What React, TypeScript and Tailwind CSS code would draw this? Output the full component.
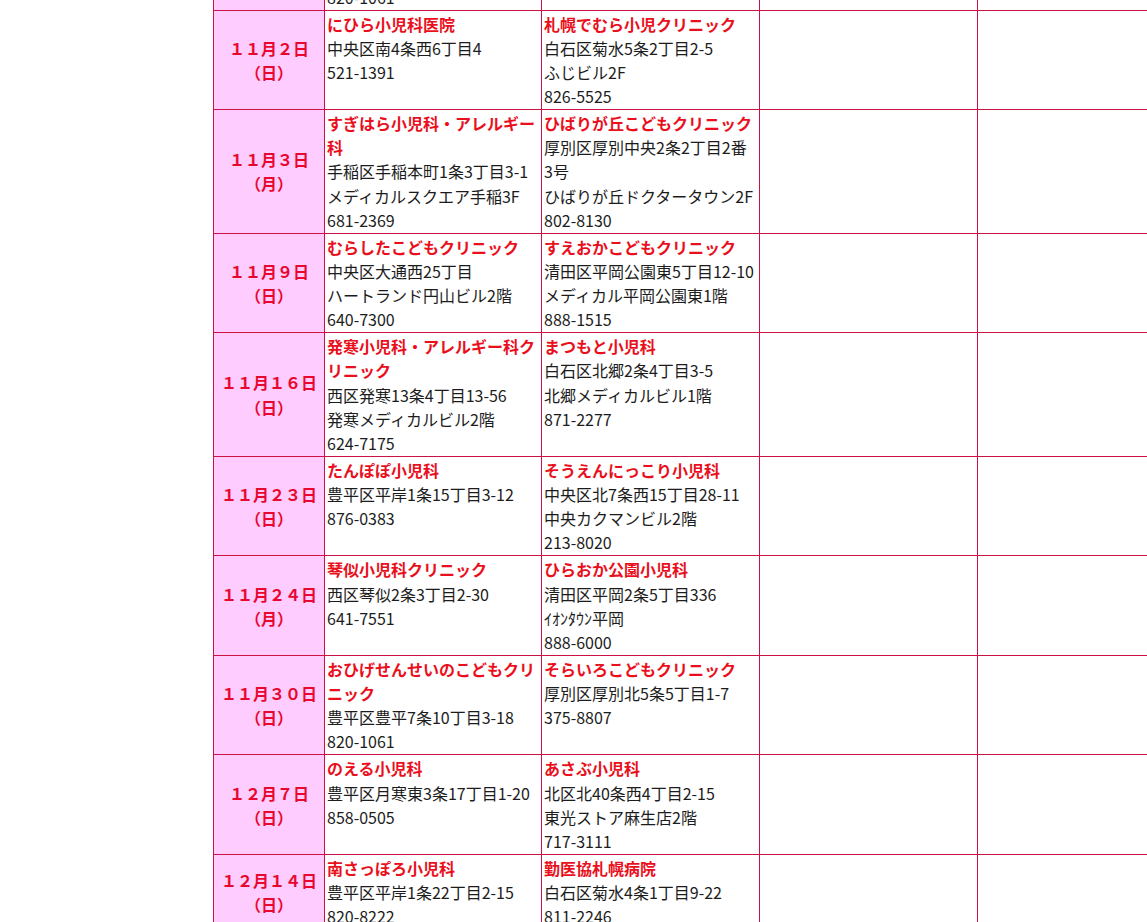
type Clinic = {
  name: string[];
  lines: string[];
};

type Row = {
  date: string;
  day: string;
  a: Clinic | null;
  b: Clinic | null;
};

const rows: Row[] = [
  {
    date: "",
    day: "",
    a: { name: [], lines: ["820-1061"] },
    b: null,
  },
  {
    date: "１１月２日",
    day: "（日）",
    a: { name: ["にひら小児科医院"], lines: ["中央区南4条西6丁目4", "521-1391"] },
    b: {
      name: ["札幌でむら小児クリニック"],
      lines: ["白石区菊水5条2丁目2-5", "ふじビル2F", "826-5525"],
    },
  },
  {
    date: "１１月３日",
    day: "（月）",
    a: {
      name: ["すぎはら小児科・アレルギー", "科"],
      lines: ["手稲区手稲本町1条3丁目3-1", "メディカルスクエア手稲3F", "681-2369"],
    },
    b: {
      name: ["ひばりが丘こどもクリニック"],
      lines: ["厚別区厚別中央2条2丁目2番", "3号", "ひばりが丘ドクタータウン2F", "802-8130"],
    },
  },
  {
    date: "１１月９日",
    day: "（日）",
    a: {
      name: ["むらしたこどもクリニック"],
      lines: ["中央区大通西25丁目", "ハートランド円山ビル2階", "640-7300"],
    },
    b: {
      name: ["すえおかこどもクリニック"],
      lines: ["清田区平岡公園東5丁目12-10", "メディカル平岡公園東1階", "888-1515"],
    },
  },
  {
    date: "１１月１６日",
    day: "（日）",
    a: {
      name: ["発寒小児科・アレルギー科ク", "リニック"],
      lines: ["西区発寒13条4丁目13-56", "発寒メディカルビル2階", "624-7175"],
    },
    b: {
      name: ["まつもと小児科"],
      lines: ["白石区北郷2条4丁目3-5", "北郷メディカルビル1階", "871-2277"],
    },
  },
  {
    date: "１１月２３日",
    day: "（日）",
    a: { name: ["たんぽぽ小児科"], lines: ["豊平区平岸1条15丁目3-12", "876-0383"] },
    b: {
      name: ["そうえんにっこり小児科"],
      lines: ["中央区北7条西15丁目28-11", "中央カクマンビル2階", "213-8020"],
    },
  },
  {
    date: "１１月２４日",
    day: "（月）",
    a: { name: ["琴似小児科クリニック"], lines: ["西区琴似2条3丁目2-30", "641-7551"] },
    b: {
      name: ["ひらおか公園小児科"],
      lines: ["清田区平岡2条5丁目336", "ｲｵﾝﾀｳﾝ平岡", "888-6000"],
    },
  },
  {
    date: "１１月３０日",
    day: "（日）",
    a: {
      name: ["おひげせんせいのこどもクリ", "ニック"],
      lines: ["豊平区豊平7条10丁目3-18", "820-1061"],
    },
    b: {
      name: ["そらいろこどもクリニック"],
      lines: ["厚別区厚別北5条5丁目1-7", "375-8807"],
    },
  },
  {
    date: "１２月７日",
    day: "（日）",
    a: { name: ["のえる小児科"], lines: ["豊平区月寒東3条17丁目1-20", "858-0505"] },
    b: {
      name: ["あさぶ小児科"],
      lines: ["北区北40条西4丁目2-15", "東光ストア麻生店2階", "717-3111"],
    },
  },
  {
    date: "１２月１４日",
    day: "（日）",
    a: { name: ["南さっぽろ小児科"], lines: ["豊平区平岸1条22丁目2-15", "820-8222"] },
    b: {
      name: ["勤医協札幌病院"],
      lines: ["白石区菊水4条1丁目9-22", "811-2246"],
    },
  },
];

function ClinicCell({ clinic }: { clinic: Clinic | null }) {
  return (
    <div className="border-r border-b border-[#cc1144] px-[2px] py-[1px]">
      {clinic?.name.map((n, i) => (
        <div key={"n" + i} className="whitespace-nowrap font-bold text-[#ea0f1c]">
          {n}
        </div>
      ))}
      {clinic?.lines.map((l, i) => (
        <div key={"l" + i} className="whitespace-nowrap">
          {l}
        </div>
      ))}
    </div>
  );
}

export default function App() {
  return (
    <div
      className="h-[922px] w-full overflow-hidden bg-white text-[16px] leading-[24.125px] text-[#1c1c1c]"
      style={{ fontFamily: '"Noto Sans CJK JP", "Noto Sans", sans-serif' }}
    >
      <div className="ml-[213px] mt-[-16.5px] grid grid-cols-[112px_217px_218px_218px_260px]">
        {rows.map((r, i) => (
          <div key={i} className="contents">
            <div className="flex flex-col items-center justify-center border-x border-b border-[#cc1144] bg-[#ffccff] py-[1px] text-center font-bold text-[#e8072e]">
              <div>{r.date}</div>
              <div>{r.day}</div>
            </div>
            <ClinicCell clinic={r.a} />
            <ClinicCell clinic={r.b} />
            <div className="border-r border-b border-[#cc1144]" />
            <div className="border-r border-b border-[#cc1144]" />
          </div>
        ))}
      </div>
    </div>
  );
}
